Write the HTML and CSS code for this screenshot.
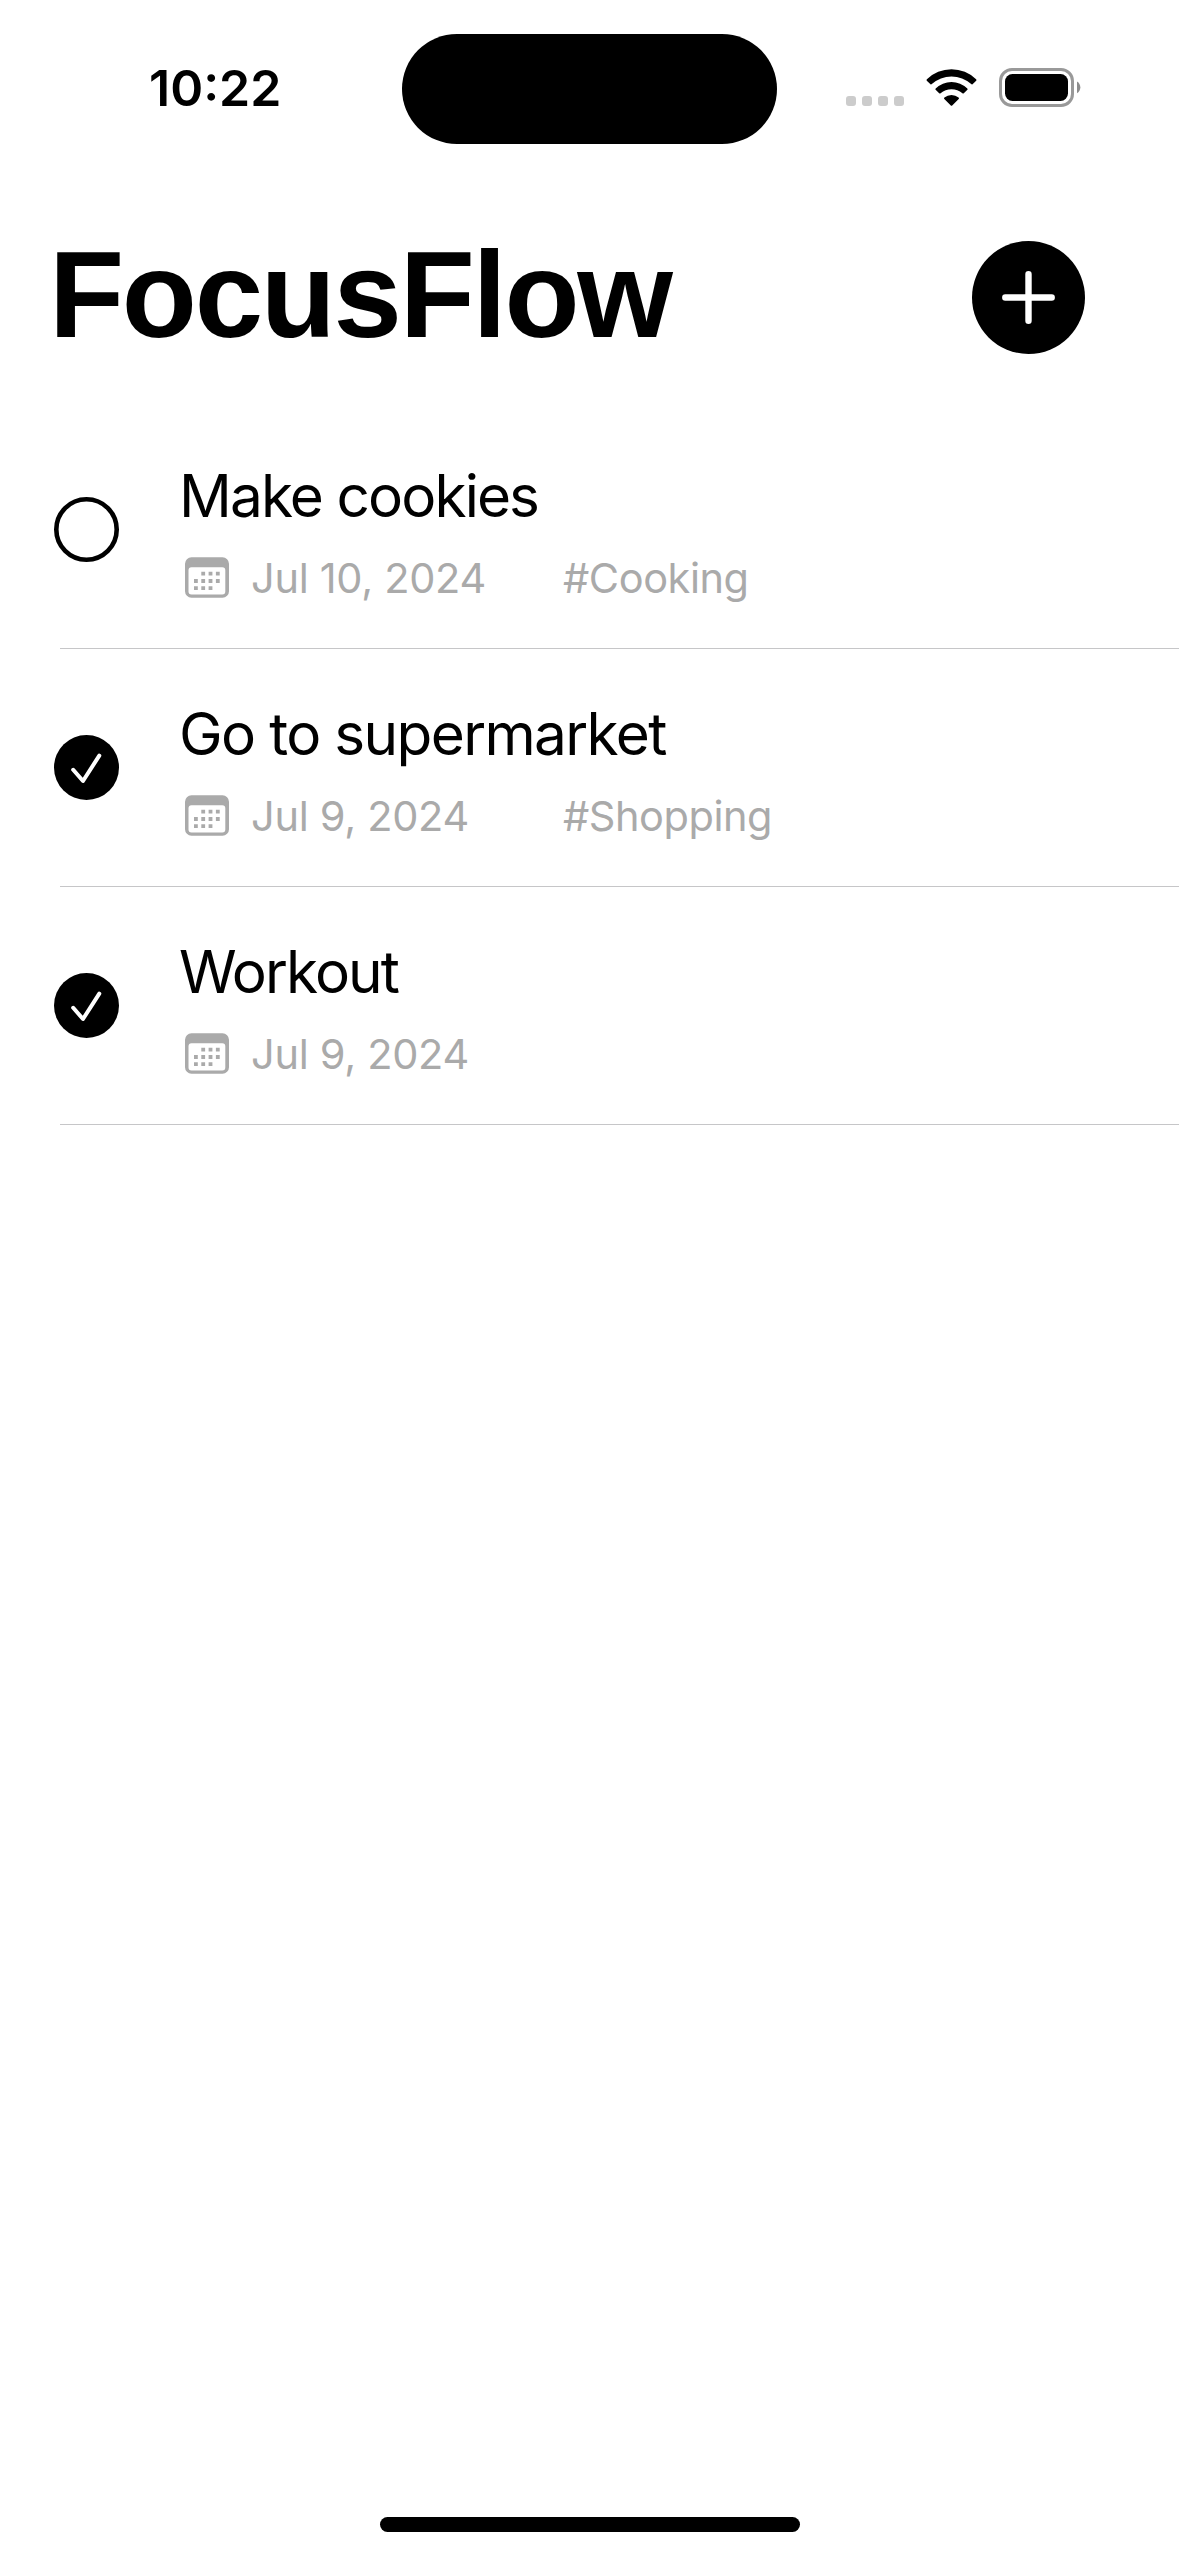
FILE: index.html
```html
<!DOCTYPE html>
<html lang="en">
<head>
<meta charset="utf-8">
<title>FocusFlow</title>
<link rel="stylesheet" href="styles.css">
</head>
<body>
<svg width="0" height="0" class="symbols" aria-hidden="true">
  <symbol id="calendar" viewBox="0 0 44 41">
    <path fill-rule="evenodd" d="M6.500 0.300H37.500A6.500 6.500 0 0 1 44 6.800V34.200A6.500 6.500 0 0 1 37.500 40.700H6.500A6.500 6.500 0 0 1 0 34.200V6.800A6.500 6.500 0 0 1 6.500 0.300ZM6.500 10.200A3 3 0 0 0 3.500 13.200V34.400A3 3 0 0 0 6.500 37.400H37.300A3 3 0 0 0 40.300 34.400V13.200A3 3 0 0 0 37.300 10.200Z"/>
    <path class="days" d="M18.200 16.700h.01M25.500 16.700h.01M32.800 16.700h.01M10.900 24h.01M18.200 24h.01M25.500 24h.01M32.800 24h.01M10.900 31.200h.01M18.200 31.200h.01M25.500 31.200h.01"/>
  </symbol>
  <symbol id="open" viewBox="0 0 65 65"><circle cx="32.500" cy="32.500" r="30.200" fill="none" stroke="#000" stroke-width="4.600"/></symbol>
  <symbol id="done" viewBox="0 0 65 65"><circle cx="32.500" cy="32.500" r="32.500"/><path d="M19.200 34.800L29 46L45.300 20.600" fill="none" stroke="#fff" stroke-width="4" stroke-linecap="round" stroke-linejoin="round"/></symbol>
</svg>
<div class="screen">
  <div class="status">
    <div class="time">10:22</div>
    <div class="island"></div>
    <div class="indicators">
      <div class="signal"><i></i><i></i><i></i><i></i></div>
      <svg class="wifi" viewBox="0 0 51 37">
        <path d="M.8 11.700Q.2 11 .9 10.300A35 35 0 0 1 50.100 10.300Q50.800 11 50.200 11.700L46.500 15.200Q45.900 15.700 45.200 15.100A29.500 29.500 0 0 0 5.800 15.100Q5.100 15.700 4.500 15.200Z"/>
        <path d="M9.600 20.800Q9 20.200 9.700 19.500A22.500 22.500 0 0 1 41.300 19.500Q42 20.200 41.400 20.800L37.800 24.300Q37.100 24.900 36.400 24.300A16.700 16.700 0 0 0 14.600 24.300Q13.900 24.900 13.200 24.300Z"/>
        <path d="M18.300 29.900Q17.600 29.200 18.400 28.500A11 11 0 0 1 32.600 28.500Q33.400 29.200 32.700 29.900L26.200 36.400Q25.500 37 24.800 36.400Z"/>
      </svg>
      <svg class="battery" viewBox="0 0 82 39">
        <rect x="1.500" y="1.500" width="72" height="36" rx="11.500" fill="none" stroke="#999" stroke-width="3"/>
        <rect x="6" y="6" width="63" height="27" rx="7.500"/>
        <path d="M78 13.500A6.800 6.800 0 0 1 78 25.200Z" fill="#8c8c8c"/>
      </svg>
    </div>
  </div>
  <header class="header">
    <h1>FocusFlow</h1>
    <svg class="add" viewBox="0 0 113 113"><circle cx="56.500" cy="56.500" r="56.500"/><path d="M33.300 56.500H79.700M56.500 33.300V79.700" stroke="#fff" stroke-width="6.400" stroke-linecap="round"/></svg>
  </header>
  <ul class="tasks">
    <li class="task">
      <svg class="check"><use href="#open"/></svg>
      <div class="body">
        <div class="name">Make cookies</div>
        <div class="meta"><svg class="cal"><use href="#calendar"/></svg><span class="date">Jul 10, 2024</span><span class="tag">#Cooking</span></div>
      </div>
    </li>
    <li class="task">
      <svg class="check"><use href="#done"/></svg>
      <div class="body">
        <div class="name name-long">Go to supermarket</div>
        <div class="meta"><svg class="cal"><use href="#calendar"/></svg><span class="date">Jul 9, 2024</span><span class="tag">#Shopping</span></div>
      </div>
    </li>
    <li class="task">
      <svg class="check"><use href="#done"/></svg>
      <div class="body">
        <div class="name">Workout</div>
        <div class="meta"><svg class="cal"><use href="#calendar"/></svg><span class="date">Jul 9, 2024</span></div>
      </div>
    </li>
  </ul>
  <div class="home"></div>
</div>
</body>
</html>
```
FILE: styles.css
```css
* { box-sizing: border-box; }

body {
  margin: 0;
  background: #fff;
  color: #000;
  font-family: Inter, "Liberation Sans", sans-serif;
}

svg { display: block; flex: none; }
.symbols { position: absolute; }

.screen {
  display: flex;
  flex-direction: column;
  width: 1179px;
  height: 2556px;
}

/* Status bar */
.status {
  display: grid;
  grid-template-columns: 402px 375px 1fr;
  height: 177px;
  padding-top: 33px;
}

.time {
  padding: 25px 0 0 149px;
  font-size: 50px;
  font-weight: 600;
  line-height: 60px;
}

.island {
  height: 110px;
  margin-top: 1px;
  border-radius: 55px;
  background: #000;
}

.indicators {
  display: flex;
  align-items: flex-start;
  padding: 35px 0 0 69px;
}

.signal {
  display: flex;
  gap: 6px;
  padding-top: 28px;
}

.signal i {
  width: 10px;
  height: 10px;
  border-radius: 3px;
  background: #ccc;
}

.wifi { width: 51px; height: 37px; margin: 1px 22px 0; }
.battery { width: 82px; height: 39px; }

/* Title row */
.header {
  display: flex;
  justify-content: space-between;
  align-items: flex-start;
  height: 234px;
  padding: 48px 94px 0 49px;
}

h1 {
  margin: 0;
  font: 700 123px/140px "Liberation Sans", Arial, sans-serif;
  letter-spacing: -2.3px;
}

.add { width: 113px; height: 113px; margin-top: 16px; }

/* Task list */
.tasks {
  flex: 1;
  margin: 0;
  padding: 0 0 0 60px;
  list-style: none;
}

.task {
  display: flex;
  align-items: center;
  height: 238px;
  border-bottom: 1px solid #c6c6c8;
}

.check { width: 65px; height: 65px; margin-left: -6px; }

.body {
  display: flex;
  flex-direction: column;
  gap: 21px;
  padding: 0 0 0 60px;
  height: 139px;
}

.name {
  font-size: 58.5px;
  line-height: 72px;
  letter-spacing: -1.9px;
}

.name-long { letter-spacing: -1.65px; }

.meta {
  display: grid;
  grid-template-columns: 44px 312px auto;
  column-gap: 22px;
  align-items: center;
  height: 50px;
  padding-left: 6px;
  color: #aaa;
  font-size: 41.5px;
  line-height: 50px;
  letter-spacing: -0.3px;
}

.tag { margin-left: -22px; letter-spacing: -0.45px; }
.cal { width: 44px; height: 41px; margin-top: -1px; fill: #aaa; }

.days {
  fill: none;
  stroke: #aaa;
  stroke-width: 3.8;
  stroke-linecap: square;
}

.home {
  align-self: center;
  width: 420px;
  height: 15px;
  margin-bottom: 24px;
  border-radius: 8px;
  background: #000;
}
```
